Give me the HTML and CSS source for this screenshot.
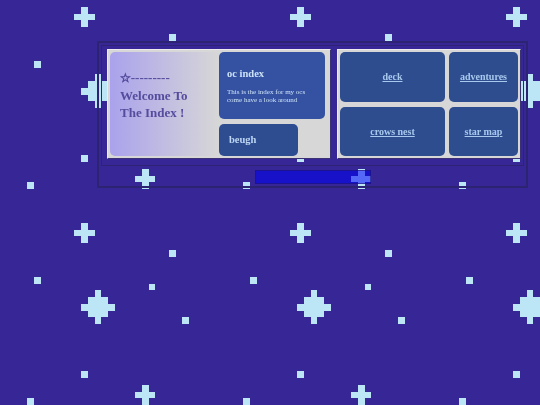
FILE: index.html
```html
<!DOCTYPE html>
<html>
<head>
    <title>The Index</title>
    <link rel="stylesheet" href="styles.css">
</head>
<body>
    <!-- pixel star wallpaper, one 32x32 tile blown up to 216px -->
    <svg class="sky" aria-hidden="true">
        <defs>
            <pattern id="stars" width="216" height="216" patternUnits="userSpaceOnUse" viewBox="0 0 32 32">
                <g fill="#bce5f6" shape-rendering="crispEdges">
                    <rect x="11" y="2" width="3" height="1"/>
                    <rect x="12" y="1" width="1" height="3"/>
                    <rect x="25" y="5" width="1" height="1"/>
                    <rect x="5" y="9" width="1" height="1"/>
                    <rect x="22" y="10" width="1" height="1"/>
                    <rect x="12" y="13" width="5" height="1"/>
                    <rect x="13" y="12" width="3" height="3"/>
                    <rect x="14" y="11" width="1" height="5"/>
                    <rect x="27" y="15" width="1" height="1"/>
                    <rect x="12" y="23" width="1" height="1"/>
                    <rect x="20" y="26" width="3" height="1"/>
                    <rect x="21" y="25" width="1" height="3"/>
                    <rect x="4" y="27" width="1" height="1"/>
                </g>
            </pattern>
        </defs>
        <rect width="100%" height="100%" fill="url(#stars)"/>
    </svg>

    <div class="site">
        <div class="frame">
            <div class="box">
                <div class="welcome">
                    <div class="intro">
                        <p class="hello"><span class="star">☆</span>---------<br>Welcome To<br>The Index !</p>
                    </div>
                    <div class="side">
                        <div class="card main">
                            <h2>oc index</h2>
                            <p>This is the index for my ocs come have a look around</p>
                        </div>
                        <div class="card small">
                            <h2>beugh</h2>
                        </div>
                    </div>
                </div>
            </div>
            <div class="box">
                <nav class="links">
                    <a href="#">deck</a>
                    <a href="#">adventures</a>
                    <a href="#">crows nest</a>
                    <a href="#">star map</a>
                </nav>
            </div>
        </div>
        <div class="bar"></div>
    </div>
</body>
</html>
```

FILE: styles.css
```css
body {
    margin: 0;
    background-color: #372796;
    font-family: "Liberation Serif", "Times New Roman", serif;
}
.sky {
    position: fixed;
    top: 0;
    left: 0;
    width: 100%;
    height: 100%;
    z-index: -1;
}
.site {
    box-sizing: border-box;
    width: 431px;
    margin: 41px 0 0 97px;
    padding: 2px;
    border: 2px solid #2c2473;
}
.frame {
    display: flex;
    gap: 6px;
    padding: 3px 2px 6px 5px;
    border: 1px solid #2c2473;
}
.box {
    box-sizing: border-box;
    height: 110px;
    padding: 2px;
    background: #d7d7d7;
    border-top: 1px solid #ececec;
    border-left: 1px solid #ececec;
    border-right: 1px solid #3a3274;
    border-bottom: 1px solid #3a3274;
}
.box:first-child {
    width: 224px;
}
.box:last-child {
    width: 184px;
}
.welcome {
    display: flex;
    height: 100%;
    border-radius: 5px;
    background: linear-gradient(90deg, #aaa2ec 0%, #d7d7d7 50%);
}
.intro {
    width: 109px;
    padding: 17px 0 0 10px;
    box-sizing: border-box;
}
.hello {
    margin: 0;
    font-size: 13px;
    font-weight: bold;
    line-height: 17px;
    color: #554c9d;
}
.star {
    font-family: "DejaVu Sans", sans-serif;
    font-size: 12px;
    -webkit-text-stroke: 0.7px #554c9d;
}
.side {
    display: flex;
    flex-direction: column;
    gap: 5px;
    width: 106px;
}
.card {
    box-sizing: border-box;
    border-radius: 5px;
    color: #cce1f7;
}
.card h2 {
    margin: 0;
    font-size: 10.5px;
    line-height: 12px;
}
.card p {
    margin: 8px 0 0;
    font-size: 7px;
    line-height: 8px;
}
.card.main {
    flex: 1;
    padding: 16px 6px 0 8px;
    background: #3552a2;
}
.card.small {
    display: flex;
    align-items: center;
    width: 79px;
    height: 32px;
    padding-left: 10px;
    background: #2e4d91;
    color: #bcd6f3;
}
.links {
    display: grid;
    grid-template-columns: 105px 1fr;
    grid-template-rows: 1fr 1fr;
    gap: 5px 4px;
    height: 100%;
}
.links a {
    display: flex;
    align-items: center;
    justify-content: center;
    border-radius: 5px;
    background: #2e4d8f;
    color: #a8c8ee;
    font-size: 10px;
    font-weight: bold;
}
.bar {
    width: 116px;
    height: 14px;
    margin: 4px auto 0;
    box-sizing: border-box;
    border: 1px solid rgba(30, 20, 110, 0.6);
    background: rgba(0, 0, 245, 0.55);
}
```
